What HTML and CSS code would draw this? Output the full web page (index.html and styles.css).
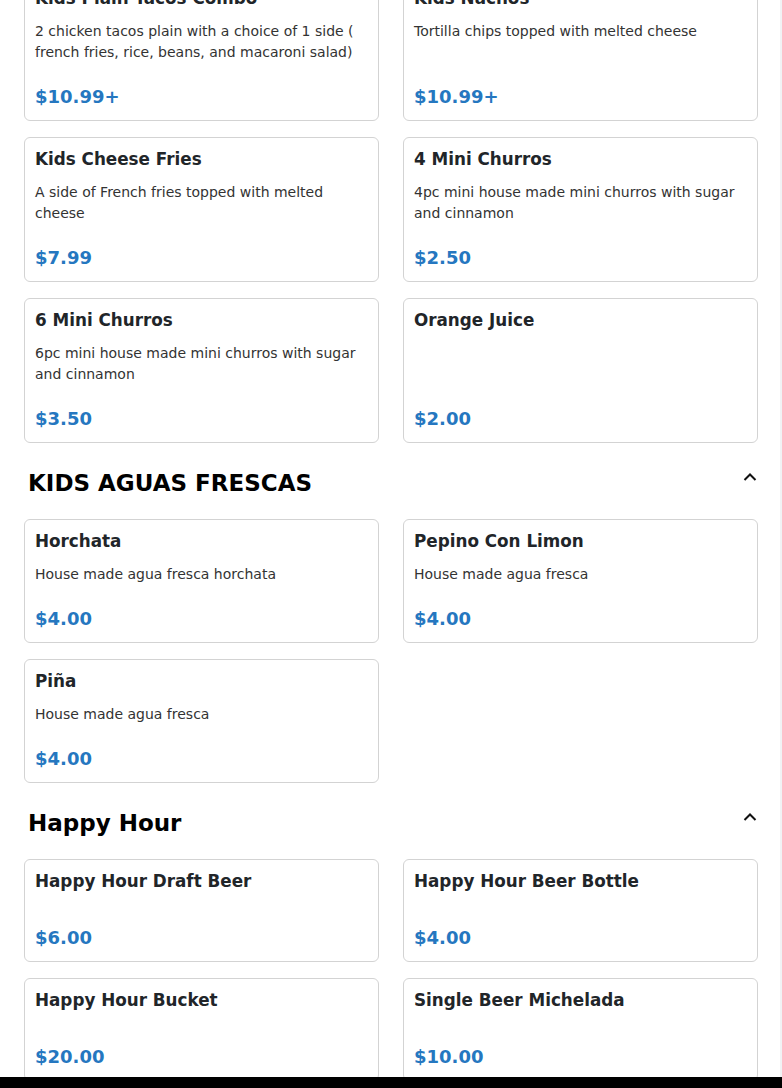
FILE: index.html
```html
<!DOCTYPE html>
<html lang="en">

<head>
    <meta charset="UTF-8">
    <meta name="viewport" content="width=device-width, initial-scale=1.0">
    <title>Menu</title>
    <link rel="stylesheet" href="styles.css">
</head>

<body>
    <div class="menu">
        <section class="menu-section first">
            <div class="item-grid">
                <div class="item-card">
                    <div class="item-name">Kids Plain Tacos Combo</div>
                    <div class="item-desc">2 chicken tacos plain with a choice of 1 side ( french fries, rice, beans, and macaroni salad)</div>
                    <div class="item-price">$10.99+</div>
                </div>
                <div class="item-card">
                    <div class="item-name">Kids Nachos</div>
                    <div class="item-desc">Tortilla chips topped with melted cheese</div>
                    <div class="item-price">$10.99+</div>
                </div>
                <div class="item-card">
                    <div class="item-name">Kids Cheese Fries</div>
                    <div class="item-desc">A side of French fries topped with melted cheese</div>
                    <div class="item-price">$7.99</div>
                </div>
                <div class="item-card">
                    <div class="item-name">4 Mini Churros</div>
                    <div class="item-desc">4pc mini house made mini churros with sugar and cinnamon</div>
                    <div class="item-price">$2.50</div>
                </div>
                <div class="item-card">
                    <div class="item-name">6 Mini Churros</div>
                    <div class="item-desc">6pc mini house made mini churros with sugar and cinnamon</div>
                    <div class="item-price">$3.50</div>
                </div>
                <div class="item-card">
                    <div class="item-name">Orange Juice</div>
                    <div class="item-desc"></div>
                    <div class="item-price">$2.00</div>
                </div>
            </div>
        </section>

        <section class="menu-section">
            <div class="section-head">
                <h2>KIDS AGUAS FRESCAS</h2>
                <svg class="chevron" width="16" height="14" viewBox="0 0 16 14">
                    <path d="M2.5 10 L8 4.5 L13.5 10" fill="none" stroke="#111" stroke-width="2" />
                </svg>
            </div>
            <div class="item-grid">
                <div class="item-card">
                    <div class="item-name">Horchata</div>
                    <div class="item-desc">House made agua fresca horchata</div>
                    <div class="item-price">$4.00</div>
                </div>
                <div class="item-card">
                    <div class="item-name">Pepino Con Limon</div>
                    <div class="item-desc">House made agua fresca</div>
                    <div class="item-price">$4.00</div>
                </div>
                <div class="item-card">
                    <div class="item-name">Piña</div>
                    <div class="item-desc">House made agua fresca</div>
                    <div class="item-price">$4.00</div>
                </div>
            </div>
        </section>

        <section class="menu-section">
            <div class="section-head">
                <h2>Happy Hour</h2>
                <svg class="chevron" width="16" height="14" viewBox="0 0 16 14">
                    <path d="M2.5 10 L8 4.5 L13.5 10" fill="none" stroke="#111" stroke-width="2" />
                </svg>
            </div>
            <div class="item-grid">
                <div class="item-card">
                    <div class="item-name">Happy Hour Draft Beer</div>
                    <div class="item-desc"></div>
                    <div class="item-price">$6.00</div>
                </div>
                <div class="item-card">
                    <div class="item-name">Happy Hour Beer Bottle</div>
                    <div class="item-desc"></div>
                    <div class="item-price">$4.00</div>
                </div>
                <div class="item-card">
                    <div class="item-name">Happy Hour Bucket</div>
                    <div class="item-desc"></div>
                    <div class="item-price">$20.00</div>
                </div>
                <div class="item-card">
                    <div class="item-name">Single Beer Michelada</div>
                    <div class="item-desc"></div>
                    <div class="item-price">$10.00</div>
                </div>
            </div>
        </section>
    </div>
    <div class="cart-bar"></div>
</body>

</html>
```

FILE: styles.css
```css
* {
    box-sizing: border-box;
}

body {
    margin: 0;
    background-color: #fff;
    font-family: "DejaVu Sans", Verdana, sans-serif;
    color: #212529;
}

.menu {
    width: 782px;
    padding: 0 22px 0 24px;
    border-right: 2px solid #f1f3f5;
    /* page is shown scrolled a little past the top */
    margin-top: -24px;
    height: 1200px;
}

.menu-section {
    padding-top: 27px;
}

.menu-section.first {
    padding-top: 0;
}

.section-head {
    display: flex;
    justify-content: space-between;
    align-items: flex-start;
    padding-left: 4px;
    margin-bottom: 21px;
}

.section-head h2 {
    margin: 0;
    font-size: 23px;
    line-height: 1.2;
    font-weight: bold;
    color: #000;
}

.chevron {
    display: block;
}

.item-grid {
    display: grid;
    grid-template-columns: 1fr 1fr;
    column-gap: 24px;
    row-gap: 16px;
}

.item-card {
    display: flex;
    flex-direction: column;
    border: 1px solid #d3d3d3;
    border-radius: 6px;
    padding: 11px 10px;
}

.item-name {
    font-size: 16.8px;
    line-height: 1.2;
    font-weight: bold;
    color: #212529;
}

.item-desc {
    margin-top: 13px;
    font-size: 14px;
    line-height: 21px;
    color: #333;
}

.item-price {
    margin-top: auto;
    padding-top: 22px;
    font-size: 18px;
    line-height: 24px;
    font-weight: bold;
    color: #2577c0;
}

.cart-bar {
    position: fixed;
    left: 0;
    right: 0;
    bottom: 0;
    height: 11px;
    background-color: #000;
}
```
